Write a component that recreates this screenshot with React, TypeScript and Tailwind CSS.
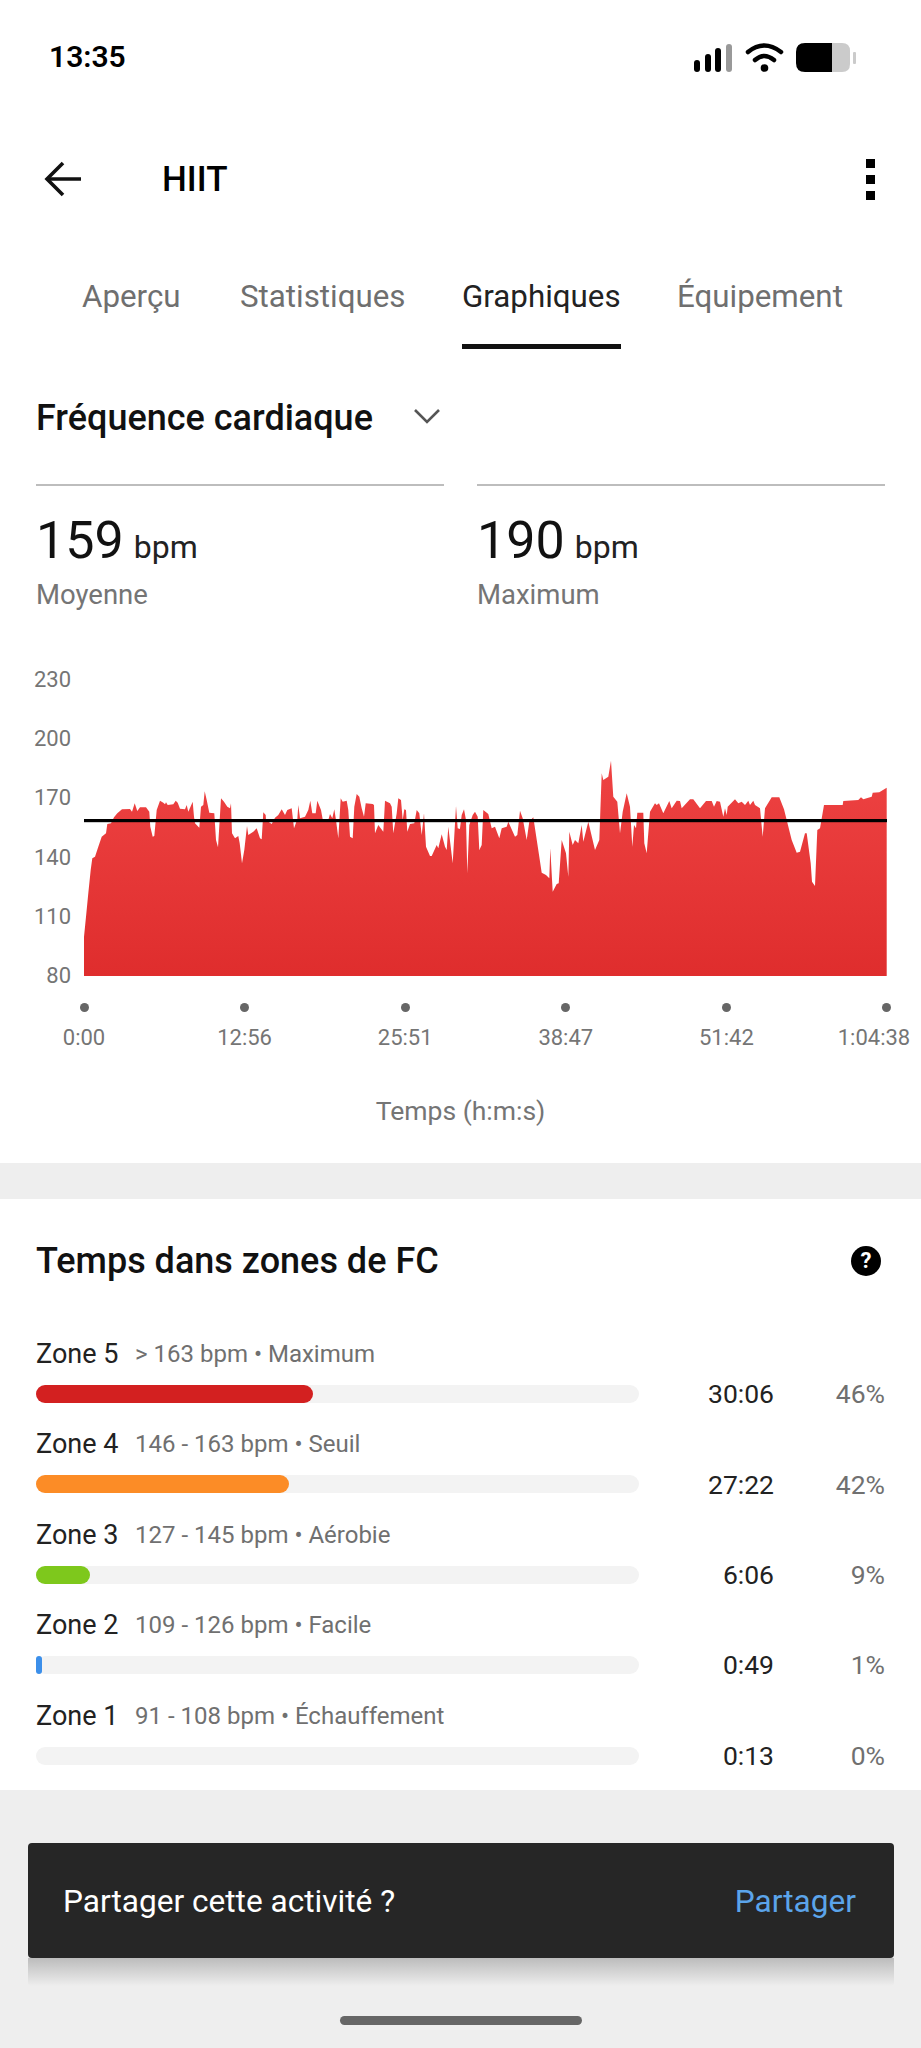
// HIIT activity detail, charts tab
const LEFT_TRACE = [
  250,978, 252,860, 258,800, 265,730, 272,660, 277,625, 285,620, 295,590, 305,560, 318,550, 322,522, 333,520, 342,502, 352,490, 366,478, 390,477, 396,485, 404,460, 412,483, 420,472, 438,472, 448,485, 451,530, 458,560, 463,558, 470,480, 480,452, 490,458, 495,463, 498,457, 503,465, 520,463, 527,452, 533,458, 540,476, 555,478, 560,465, 565,485, 578,455, 582,500, 585,520, 598,533, 603,470, 610,465, 614,424, 620,450, 628,488, 643,490, 648,570, 654,592, 663,445, 672,455, 682,470, 690,475, 693,460, 696,550, 705,565, 715,558, 719,580, 726,640, 733,600, 741,528, 745,555, 760,545, 770,535, 780,565, 785,568, 790,487, 797,495, 798,510, 815,522, 825,503, 835,495, 845,478, 855,495, 862,480, 875,475, 882,535, 892,508, 895,465, 900,505, 915,500, 925,480, 931,452, 937,490, 947,490, 952,452, 963,480, 968,508, 985,510, 990,492, 997,505, 1003,478, 1008,510, 1015,565, 1022,445, 1028,455, 1040,452, 1045,480, 1050,560, 1058,565, 1063,470, 1070,432, 1078,440, 1085,475, 1092,500, 1097,460, 1118,462, 1122,465, 1125,550, 1135,525, 1150,545, 1155,452, 1170,460, 1175,470, 1180,550, 1190,490, 1195,445, 1203,450, 1208,510, 1213,478, 1218,480, 1222,545, 1230,522, 1243,520, 1250,480, 1258,490, 1265,555, 1272,490, 1278,590, 1290,618, 1295,618, 1310,585, 1315,595, 1325,553, 1335,590, 1340,600, 1345,530, 1358,640, 1368,468, 1373,535, 1380,537,
];

const RIGHT_TRACE = [
  0,265, 5,225, 12,208, 18,240, 22,400, 28,255, 38,225, 45,215, 53,230, 58,330, 65,315, 70,210, 85,222, 95,265, 105,260, 118,295, 125,265, 140,260, 145,245, 165,290, 172,285, 180,212, 188,235, 200,300, 208,245, 220,232, 238,350, 245,398, 258,405, 268,415, 271,325, 278,455, 290,432, 296,430, 305,300, 318,340, 325,410, 328,275, 338,315, 345,300, 355,310, 365,255, 370,305, 385,245, 405,330, 418,300, 425,100, 430,120, 445,110, 453,62, 460,170, 472,185, 480,280, 488,215, 500,160, 510,200, 517,320, 522,255, 528,265, 532,218, 550,218, 553,310, 560,340, 570,215, 585,190, 590,195, 597,190, 610,220, 628,183, 635,205, 650,182, 660,183, 665,205, 690,178, 700,178, 720,205, 738,183, 755,183, 762,200, 770,183, 780,185, 790,230, 795,205, 800,225, 803,200, 825,178, 835,190, 845,185, 855,195, 865,182, 870,195, 880,182, 885,195, 900,205, 908,290, 915,205, 935,172, 958,172, 972,208, 995,300, 1010,338, 1020,335, 1035,280, 1040,280, 1052,370, 1056,425, 1065,438, 1072,270, 1080,265, 1092,195, 1148,195, 1150,183, 1195,180, 1203,172, 1210,178, 1235,170, 1238,158, 1258,157, 1280,143, 1280,708,
];

function tracePoints() {
  const pts: string[] = [];
  for (let i = 0; i < LEFT_TRACE.length; i += 2) {
    pts.push(`${(LEFT_TRACE[i] / 3).toFixed(1)},${(650 + LEFT_TRACE[i + 1] / 3).toFixed(1)}`);
  }
  for (let i = 0; i < RIGHT_TRACE.length; i += 2) {
    pts.push(`${(460 + RIGHT_TRACE[i] / 3).toFixed(1)},${(740 + RIGHT_TRACE[i + 1] / 3).toFixed(1)}`);
  }
  return pts.join(' ');
}

const Y_LABELS = ['230', '200', '170', '140', '110', '80'];
const X_LABELS = ['0:00', '12:56', '25:51', '38:47', '51:42'];

const ZONES = [
  { name: 'Zone 5', detail: '> 163 bpm • Maximum', time: '30:06', pct: '46%', bar: 'w-[277px] bg-[#d32020]' },
  { name: 'Zone 4', detail: '146 - 163 bpm • Seuil', time: '27:22', pct: '42%', bar: 'w-[253px] bg-[#fc8c26]' },
  { name: 'Zone 3', detail: '127 - 145 bpm • Aérobie', time: '6:06', pct: '9%', bar: 'w-[54px] bg-[#7ec81c]' },
  { name: 'Zone 2', detail: '109 - 126 bpm • Facile', time: '0:49', pct: '1%', bar: 'w-[6px] bg-[#3c8fea]' },
  { name: 'Zone 1', detail: '91 - 108 bpm • Échauffement', time: '0:13', pct: '0%', bar: 'w-0' },
];

function StatusIcons() {
  return (
    <svg width="164" height="30" viewBox="695 43 164 30">
      <rect x="695" y="60" width="6" height="12" rx="3" fill="#000" />
      <rect x="706" y="54" width="6" height="18" rx="3" fill="#000" />
      <rect x="716" y="48" width="6" height="24" rx="3" fill="#000" />
      <rect x="727" y="44" width="6" height="28" rx="3" fill="#999" />
      <path d="M749 52 Q765 39 782 52" fill="none" stroke="#000" strokeWidth="4.5" strokeLinecap="round" />
      <path d="M756 60 Q765 52 775 60" fill="none" stroke="#000" strokeWidth="4.5" strokeLinecap="round" />
      <circle cx="765.5" cy="68" r="3.8" fill="#000" />
      <path d="M833 43 H843 Q851 43 851 51 V64 Q851 72 843 72 H833 Z" fill="#cbcbcb" />
      <path d="M833 43 H806 Q797 43 797 52 V63 Q797 72 806 72 H833 Z" fill="#000" />
      <rect x="854" y="52" width="3" height="12" rx="1" fill="#cbcbcb" />
    </svg>
  );
}

function Stat({ value, label }: { value: string; label: string }) {
  return (
    <div className="w-[408px] border-t-2 border-[#bdbdbd] pt-[25px]">
      <div className="flex items-baseline h-[60px] leading-[60px]">
        <span className="text-[52px] text-[#111]">{value}</span>
        <span className="text-[32px] text-[#222] ml-[10px]">bpm</span>
      </div>
      <div className="text-[27.5px] leading-[34px] text-[#757575] mt-[7px]">{label}</div>
    </div>
  );
}

export default function App() {
  return (
    <div
      className="w-[921px] h-[2048px] bg-[#eeeeee] overflow-hidden"
      style={{ fontFamily: 'Roboto, "Liberation Sans", sans-serif' }}
    >
      <div className="bg-white">
        {/* status bar */}
        <div className="h-[114px] flex items-start justify-between pl-[49px] pr-[63px] pt-[38px]">
          <span className="text-[30px] leading-[38px] font-semibold text-black">13:35</span>
          <div className="pt-[5px]">
            <StatusIcons />
          </div>
        </div>

        {/* header */}
        <div className="h-[130px] flex items-center pl-[44px] pr-[46px]">
          <svg width="38" height="36" viewBox="0 0 38 36" fill="none" stroke="#111" strokeWidth="3.6">
            <path d="M37 18 H3" />
            <path d="M19 2 L3 18 L19 34" />
          </svg>
          <h1 className="ml-[80px] mt-[2px] text-[35px] leading-[40px] font-medium text-black">HIIT</h1>
          <div className="ml-auto flex flex-col gap-[7px]">
            <div className="w-[9px] h-[9px] bg-black" />
            <div className="w-[9px] h-[9px] bg-black" />
            <div className="w-[9px] h-[9px] bg-black" />
          </div>
        </div>

        {/* tabs */}
        <div className="h-[154px] flex pl-[82px] text-[31.3px] text-[#6f6f6f]">
          <div className="w-[158px] pt-[33px] leading-[40px]">Aperçu</div>
          <div className="w-[222px] pt-[33px] leading-[40px]">Statistiques</div>
          <div className="w-[215px] pt-[33px] leading-[40px]">
            <div className="w-[159px] h-[72px] border-b-[5px] border-[#111] text-[#222]">Graphiques</div>
          </div>
          <div className="pt-[33px] leading-[40px]">Équipement</div>
        </div>

        {/* metric picker */}
        <div className="px-[36px] h-[134px] flex flex-col">
          <div className="h-[68px] flex items-center">
            <span className="text-[36px] leading-[40px] font-medium text-[#111]">Fréquence cardiaque</span>
            <svg className="ml-[40px] mb-[4px]" width="28" height="16" viewBox="0 0 28 16" fill="none" stroke="#555" strokeWidth="2.6">
              <path d="M2 2 L14 14 L26 2" />
            </svg>
          </div>
          <div className="flex justify-between mt-[46px] w-[849px]">
            <Stat value="159" label="Moyenne" />
            <Stat value="190" label="Maximum" />
          </div>
        </div>

        <div className="h-[51px]" />

        {/* chart */}
        <div className="pt-[85px]">
          <div className="flex h-[320px]">
            <div className="w-[71px] h-[320px] flex flex-col justify-between text-right text-[22px] leading-[24px] text-[#757575]">
              {Y_LABELS.map(l => (
                <div key={l}>{l}</div>
              ))}
            </div>
            <svg className="ml-[13px] mt-[72px]" width="803" height="236" viewBox="84 740 803 236">
              <defs>
                <linearGradient id="hrFill" x1="0" y1="0" x2="0" y2="1">
                  <stop offset="0" stopColor="#ee4343" />
                  <stop offset="1" stopColor="#df2d2d" />
                </linearGradient>
              </defs>
              <polygon points={tracePoints()} fill="url(#hrFill)" />
              <rect x="84" y="819" width="803" height="3.2" fill="#000" />
            </svg>
          </div>

          {/* x axis */}
          <div className="ml-[84px] w-[803px] flex justify-between mt-[15px]">
            {X_LABELS.map(l => (
              <div key={l} className="w-0 flex flex-col items-center">
                <div className="w-[9px] h-[9px] shrink-0 rounded-full bg-[#666]" />
                <div className="mt-[12px] text-[22px] leading-[28px] text-[#757575] whitespace-nowrap">{l}</div>
              </div>
            ))}
            <div className="w-0 flex flex-col items-center">
              <div className="w-[9px] h-[9px] shrink-0 rounded-full bg-[#666]" />
              <div className="mt-[12px] -translate-x-[13px] text-[22px] leading-[28px] text-[#757575] whitespace-nowrap">1:04:38</div>
            </div>
          </div>

          <div className="text-center text-[26.5px] leading-[34px] text-[#757575] mt-[42px] pb-[35px]">Temps (h:m:s)</div>
        </div>
      </div>

      <div className="h-[36px]" />

      {/* zones */}
      <div className="bg-white h-[591px] px-[36px] pt-[41px]">
        <div className="flex items-center justify-between h-[42px] pr-[4px]">
          <h2 className="text-[36px] leading-[42px] font-medium text-[#111]">Temps dans zones de FC</h2>
          <div className="w-[30px] h-[30px] rounded-full bg-black text-white text-[22px] leading-[30px] font-bold text-center">?</div>
        </div>
        <div className="mt-[54px] flex flex-col gap-[10.4px]">
          {ZONES.map(z => (
            <div key={z.name} className="w-[849px]">
              <div className="h-[36px] flex items-center">
                <span className="w-[99px] text-[27px] leading-[36px] text-[#222]">{z.name}</span>
                <span className="text-[24px] leading-[36px] text-[#707070]">{z.detail}</span>
              </div>
              <div className="h-[44px] flex items-center">
                <div className="w-[603px] h-[18px] rounded-full bg-[#f3f3f3]">
                  <div className={`h-full rounded-[9px] ${z.bar}`} />
                </div>
                <span className="w-[135px] text-right text-[26.5px] text-[#222]">{z.time}</span>
                <span className="w-[111px] text-right text-[26.5px] text-[#707070]">{z.pct}</span>
              </div>
            </div>
          ))}
        </div>
      </div>

      {/* share prompt */}
      <div className="mt-[53px] mx-[28px] w-[866px]">
        <div className="h-[115px] bg-[#262626] rounded-[4px] flex items-center justify-between pl-[35px] pr-[38px] pt-[3px]">
          <span className="text-[31.6px] text-white">Partager cette activité ?</span>
          <span className="text-[31.6px] text-[#5ba4ea]">Partager</span>
        </div>
        <div className="h-[28px] bg-gradient-to-b from-[#bcbcbc] to-[#eeeeee] rounded-b-[4px]" />
      </div>

      <div className="mt-[30px] mx-auto w-[242px] h-[9px] rounded-full bg-[#666]" />
    </div>
  );
}
